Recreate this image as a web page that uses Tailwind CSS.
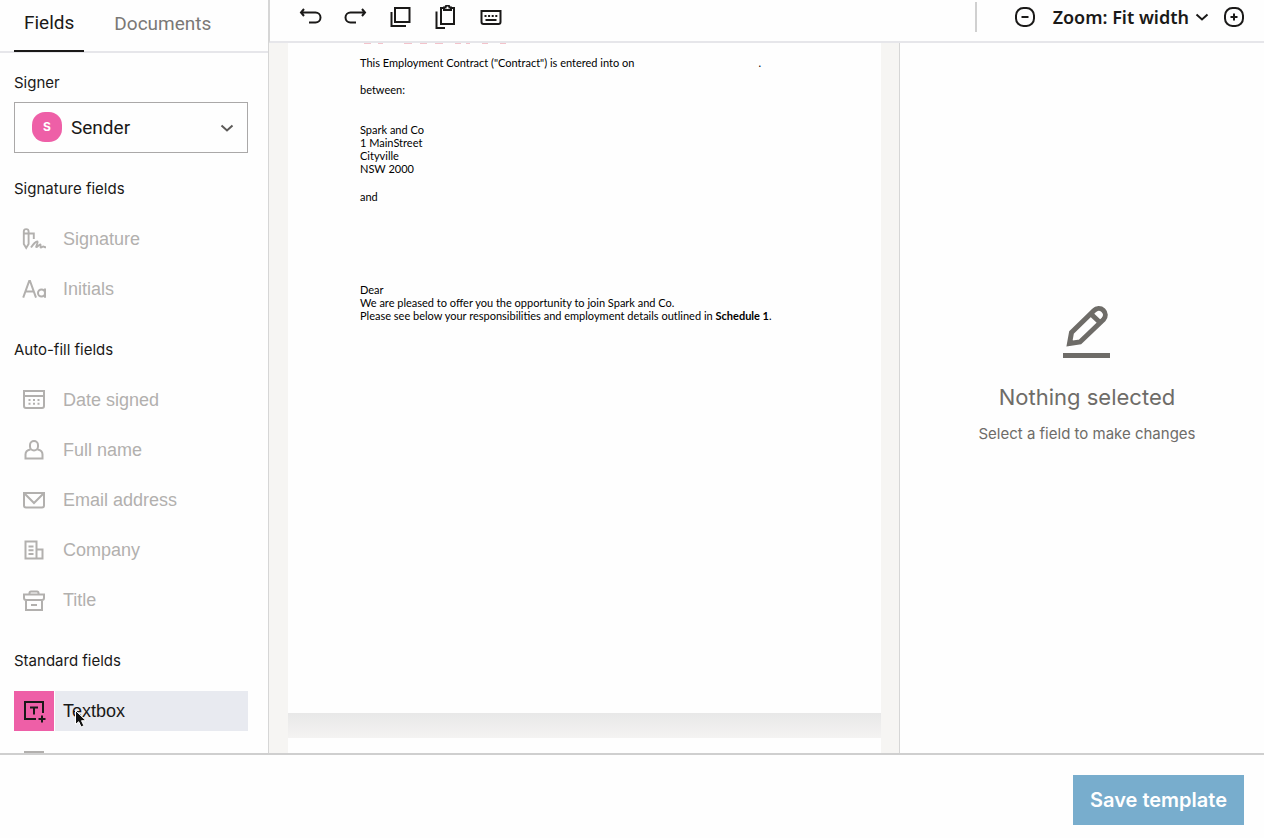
<!DOCTYPE html>
<html lang="en">
<head>
  <meta charset="UTF-8" />
  <meta name="viewport" content="width=device-width, initial-scale=1.0" />
  <title>Edit template</title>
  <script src="https://cdn.jsdelivr.net/npm/@tailwindcss/browser@4"></script>
</head>
<body class="h-screen flex flex-col overflow-hidden bg-[#fefefe] text-[#1a1918] font-['Inter','Liberation_Sans',sans-serif]">

  <div class="flex-1 min-h-0 flex">

    <!-- Sidebar -->
    <aside class="w-[269px] shrink-0 overflow-hidden border-r border-[#d6d6d6]">
      <nav class="h-[53px] pl-[14px] flex gap-5 border-b-2 border-[#e6e6ea] font-['Roboto',sans-serif] text-[19px]">
        <a href="#fields" class="h-[52px] px-[10px] pb-1 flex items-center border-b-2 border-[#1a1918]">Fields</a>
        <a href="#documents" class="h-[52px] px-[10px] pb-1 flex items-center text-[#7a7876]">Documents</a>
      </nav>

      <div class="pl-[14px] pr-5 pt-5">
        <label for="signer" class="block text-[15px] leading-5">Signer</label>
        <div class="relative mt-[9px]">
          <select id="signer" class="block w-full h-[51px] pt-[2px] pl-14 appearance-none border border-[#aaa8a8] font-['Roboto',sans-serif] text-[19px]">
            <option>Sender</option>
          </select>
          <span class="absolute left-[18px] top-[10px] size-[30px] rounded-[13px] bg-[#ee5fa7] text-white text-xs font-bold flex items-center justify-center pointer-events-none">S</span>
          <svg class="absolute right-[14px] top-[19px] pointer-events-none" width="14" height="14" fill="none" stroke="#5c5a58" stroke-width="2"><path d="M1.500 4.500l5.500 5 5.500-5" /></svg>
        </div>

        <h2 class="mt-[26px] text-[15px] leading-5">Signature fields</h2>
        <ul class="mt-5 flex flex-col gap-[10px] font-['Liberation_Sans',sans-serif] text-lg text-[#b2b0ae]">
          <li class="h-10 flex items-center gap-[9px]">
            <span class="w-10 flex justify-center"><svg width="24" height="24" fill="none" stroke="currentColor" stroke-width="1.900"><path d="M1.800 4.500a2.400 2.400 0 0 1 4.800 0v12.500l-2.400 4-2.400-4zM1.800 6.500h10v5.500M9 20.500c2-3 5.500-7 6.500-6s-2 5-1.200 5.600 3-3 4-2.600-.5 2.800.5 3 1.500-1 2.500-1 1 .8 2.700.8" /></svg></span>Signature
          </li>
          <li class="h-10 flex items-center gap-[9px]">
            <span class="w-10 flex justify-center"><svg width="24" height="24" fill="none" stroke="currentColor" stroke-width="2"><path d="M1.200 20.700L7.200 4h.8l6 16.700M3.300 14.500h8.800M23 11.500v9.200" /><circle cx="19.500" cy="16" r="3.500" /></svg></span>Initials
          </li>
        </ul>

        <h2 class="mt-[31px] text-[15px] leading-5">Auto-fill fields</h2>
        <ul class="mt-5 flex flex-col gap-[10px] font-['Liberation_Sans',sans-serif] text-lg text-[#b2b0ae]">
          <li class="h-10 flex items-center gap-[9px]">
            <span class="w-10 flex justify-center"><svg width="24" height="24" fill="none" stroke="currentColor" stroke-width="2"><path d="M2 3h20v15a2 2 0 0 1-2 2H4a2 2 0 0 1-2-2zM2 8h20" /><path stroke-dasharray="2 2.500" d="M6.500 12h12M6.500 15.800h12" /></svg></span>Date signed
          </li>
          <li class="h-10 flex items-center gap-[9px]">
            <span class="w-10 flex justify-center"><svg width="24" height="24" fill="none" stroke="currentColor" stroke-width="2"><rect x="8" y="3" width="8" height="9.500" rx="4" /><path d="M8.500 11.500C5 12 3.500 13.500 3.500 16.500V20.500h17v-4c0-3-1.500-4.500-5-5" /></svg></span>Full name
          </li>
          <li class="h-10 flex items-center gap-[9px]">
            <span class="w-10 flex justify-center"><svg width="24" height="24" fill="none" stroke="currentColor" stroke-width="2"><path d="M2 5h20v12.500a2 2 0 0 1-2 2H4a2 2 0 0 1-2-2zM2.500 5.500l9.500 9.500 9.500-9.500" /></svg></span>Email address
          </li>
          <li class="h-10 flex items-center gap-[9px]">
            <span class="w-10 flex justify-center"><svg width="24" height="24" fill="none" stroke="currentColor" stroke-width="2"><path d="M3.500 3.500h11v17h-11zM14.500 11.500h6v9h-6M6.500 8.500h5M6.500 12.200h5M6.500 16h5" /></svg></span>Company
          </li>
          <li class="h-10 flex items-center gap-[9px]">
            <span class="w-10 flex justify-center"><svg width="24" height="24" fill="none" stroke="currentColor" stroke-width="2"><path d="M7.500 6.500v-1.500a1.500 1.500 0 0 1 1.500-1.500h6a1.500 1.500 0 0 1 1.500 1.500v1.500M2 6.500h20v3.500a2 2 0 0 1-2 2H4a2 2 0 0 1-2-2zM4 12v10h16v-10M9 17h6" /></svg></span>Title
          </li>
        </ul>

        <h2 class="mt-[31px] text-[15px] leading-5">Standard fields</h2>
        <ul class="mt-5 flex flex-col gap-[10px] font-['Liberation_Sans',sans-serif] text-lg text-[#1a1918]">
          <li class="relative h-10 flex items-center bg-[#e8eaf0]">
            <span class="w-[41px] h-10 mr-2 flex items-center justify-center bg-[#ee5fa7] border-r border-white"><svg width="24" height="24" fill="none" stroke="currentColor" stroke-width="2" overflow="visible"><path d="M14 20H3V3h18v11M8 8.500h8M12 8v7.500M20 16.500v7M16.500 20h7" /></svg></span>Textbox
            <svg class="absolute left-[60px] top-[18px]" width="14" height="20"><path d="M1.500 1.500v14l3.200-2.800 2.400 5.300 2.800-1.300-2.400-5h4.500z" fill="#111" stroke="#fff" /></svg>
          </li>
          <li aria-label="Checkbox" class="h-10 flex items-center text-[#b2b0ae]">
            <span class="w-10 flex justify-center"><svg width="24" height="24" fill="none" stroke="currentColor" stroke-width="2"><rect x="3" y="3" width="18" height="18" /></svg></span>
          </li>
        </ul>
      </div>
    </aside>

    <div class="flex-1 min-w-0 flex flex-col">

      <!-- Toolbar -->
      <header class="h-[43px] shrink-0 pl-[29px] pr-[18px] pb-[7px] flex items-center border-l border-b-2 border-l-[#d6d6d6] border-b-[#e6e6ea]">
        <div class="flex gap-[21px]">
          <button aria-label="Undo"><svg width="24" height="24" fill="none" stroke="currentColor" stroke-width="2"><path d="M5 4L2 7.500 5 11M2 7.500h14.500a4.500 4.500 0 0 1 0 10H10" /></svg></button>
          <button aria-label="Redo"><svg width="24" height="24" fill="none" stroke="currentColor" stroke-width="2"><path d="M18 4l3 3.500-3 3.500M21 7.500H6.500a4.500 4.500 0 0 0 0 10H12" /></svg></button>
          <button aria-label="Copy"><svg width="24" height="24" fill="none" stroke="currentColor" stroke-width="2"><path d="M6 3h14.500v14H6zM2.500 7v14H17" /></svg></button>
          <button aria-label="Paste"><svg width="24" height="24" fill="none" stroke="currentColor" stroke-width="2"><path d="M9.500 3H7v16h13V3h-2.500M10 5V2.500h1.500a2 2 0 0 1 4 0H17V5zM2.500 6.500V23H11" /></svg></button>
          <button aria-label="Keyboard shortcuts"><svg width="24" height="24" fill="none" stroke="currentColor" stroke-width="2"><path d="M2.500 6h19v11a2 2 0 0 1-2 2h-15a2 2 0 0 1-2-2zM6.500 15h11" /><path stroke-dasharray="2 1.600" d="M5.500 11h13" /></svg></button>
        </div>
        <div class="ml-auto flex items-center">
          <span class="w-[2px] h-[30px] mr-9 bg-[#d0d0d0]"></span>
          <button aria-label="Zoom out"><svg width="24" height="24" fill="none" stroke="currentColor" stroke-width="2"><rect x="3" y="3" width="18" height="18" rx="7.500" /><path d="M8.500 12h7" /></svg></button>
          <button class="ml-4 mr-[13px] flex items-center gap-[6px] font-['Noto_Sans',sans-serif] text-lg leading-6 font-semibold">Zoom: Fit width
            <svg width="14" height="14" fill="none" stroke="currentColor" stroke-width="2"><path d="M1.500 4.500l5.500 5 5.500-5" /></svg>
          </button>
          <button aria-label="Zoom in"><svg width="24" height="24" fill="none" stroke="currentColor" stroke-width="2"><rect x="3" y="3" width="18" height="18" rx="7.500" /><path d="M8.500 12h7M12 8.500v7" /></svg></button>
        </div>
      </header>

      <div class="flex-1 min-h-0 flex">

        <!-- Document -->
        <main class="flex-1 min-w-0 overflow-hidden pl-[19px] pr-[18px] flex flex-col bg-[#f6f5f3] font-['Lato',sans-serif] text-[11px] leading-[13px] text-black">
          <article class="h-[670px] shrink-0 px-[72px] bg-[#fefefe]">
            <svg class="block" width="150" height="2" stroke="#f3c3cb" stroke-width="2"><path d="M4 0h7M18 0h5M44 0h8M60 0h7M75 0h8M95 0h6M106 0h4M122 0h6M140 0h6" /></svg>
            <p class="mt-[11px] flex"><span>This Employment Contract ("Contract") is entered into on</span><span class="ml-[124px]">.</span></p>
            <p class="mt-[14px]">between:</p>
            <p class="mt-[27px]">Spark and Co<br />1 MainStreet<br />Cityville<br />NSW 2000</p>
            <p class="mt-[15px]">and</p>
            <p class="mt-[80px]">Dear<br />We are pleased to offer you the opportunity to join Spark and Co.<br />Please see below your responsibilities and employment details outlined in <strong>Schedule 1</strong>.</p>
          </article>
          <div class="h-[25px] shrink-0 bg-linear-to-b from-[#e8e8e8] to-[#f4f3f2]"></div>
          <article class="h-[670px] shrink-0 bg-[#fefefe]"></article>
        </main>

        <!-- Properties -->
        <section class="w-[365px] shrink-0 pl-[10px] pt-[262px] flex flex-col items-center border-l border-[#d6d6d6] text-[#6e6c68]">
          <svg width="48" height="54" fill="none" stroke="currentColor" stroke-width="5"><path d="M6.500 38.500l2-11L31 5.500a6.500 6.500 0 0 1 9.500 9L17 37zM28 9l9.500 9" /><path d="M0 50.500h47" /></svg>
          <h2 class="mt-[22px] text-[22px] leading-8">Nothing selected</h2>
          <p class="mt-[9px] text-[15px] leading-6">Select a field to make changes</p>
        </section>
      </div>
    </div>
  </div>

  <!-- Footer -->
  <footer class="h-[85px] shrink-0 px-5 flex items-center justify-end border-t-2 border-[#cfcfcf]">
    <button class="h-[50px] px-[17px] mt-[6px] bg-[#78adcd] text-white font-semibold text-xl">Save template</button>
  </footer>

</body>
</html>
